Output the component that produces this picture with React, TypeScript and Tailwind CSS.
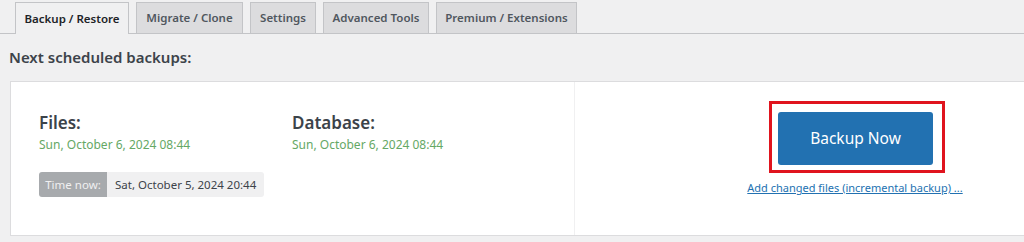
import React from "react";

const tabs = [
  { label: "Backup / Restore", w: "w-[114px]" },
  { label: "Migrate / Clone", w: "w-[107px]" },
  { label: "Settings", w: "w-[66px]" },
  { label: "Advanced Tools", w: "w-[106px]" },
  { label: "Premium / Extensions", w: "w-[141px]" },
];

const App = () => {
  return (
    <div className="w-[1024px] h-[242px] overflow-hidden bg-[#f0f0f1] font-['Noto_Sans',sans-serif] pt-[2px]">
      <div className="flex items-end gap-[7px] pl-[15px] h-[32px] border-b border-[#c3c4c7]">
        {tabs.map((t, i) => (
          <div
            key={t.label}
            className={
              i === 0
                ? `${t.w} h-[32px] -mb-px flex items-center justify-center border border-b-0 border-[#c3c4c7] bg-[#f0f0f1] text-[11.5px] font-semibold text-[#1d2327]`
                : `${t.w} h-[31px] flex items-center justify-center border border-b-0 border-[#c3c4c7] bg-[#dcdcde] text-[11.5px] font-semibold text-[#50575e]`
            }
          >
            {t.label}
          </div>
        ))}
      </div>

      <h2 className="pl-[9px] pt-[13px] text-[15px] font-semibold text-[#3c434a] leading-[20px]">Next scheduled backups:</h2>

      <div className="ml-[10px] mt-[14px] w-[1125px] h-[155px] flex bg-white border border-r-0 border-[#dcdcde]">
        <div className="w-[564px] pl-[28px] pt-[29px] border-r border-[#f0f0f1]">
          <div className="flex">
            <div className="w-[253px]">
              <div className="text-[17px] font-semibold text-[#3c434a] leading-[24px]">Files:</div>
              <div className="text-[12px] text-[#65a865] leading-[20px]">Sun, October 6, 2024 08:44</div>
            </div>
            <div>
              <div className="text-[17px] font-semibold text-[#3c434a] leading-[24px]">Database:</div>
              <div className="text-[12px] text-[#65a865] leading-[20px]">Sun, October 6, 2024 08:44</div>
            </div>
          </div>
          <div className="mt-[17px] inline-flex h-[25px] text-[11.5px] rounded-[3px] overflow-hidden">
            <span className="w-[68px] flex items-center justify-center bg-[#a7aaad] text-[#f0f0f1]">Time now:</span>
            <span className="px-[8px] flex items-center bg-[#f0f0f1] text-[#3c434a]">Sat, October 5, 2024 20:44</span>
          </div>
        </div>

        <div className="w-[560px] flex flex-col items-center pt-[19px]">
          <div className="border-[3px] border-[#e0141e] pt-[8px] pl-[6px] pr-[9px] pb-[5px] ml-[4px]">
            <button className="w-[155px] h-[53px] rounded-[3px] bg-[#2271b1] text-white text-[15.5px]">Backup Now</button>
          </div>
          <a className="mt-[8px] text-[11px] text-[#2271b1] underline leading-[14px]" href="#">
            Add changed files (incremental backup) ...
          </a>
        </div>
      </div>
    </div>
  );
};

export default App;
